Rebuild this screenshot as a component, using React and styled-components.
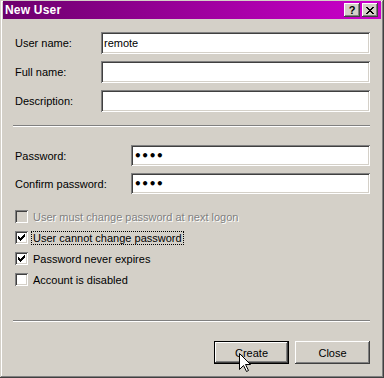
import React from "react";
import styled, { createGlobalStyle, css } from "styled-components";

const GlobalStyle = createGlobalStyle`
  html, body {
    margin: 0;
    padding: 0;
    background: #d4d0c8;
  }
  body {
    font-family: "Liberation Sans", Arial, sans-serif;
    font-size: 11px;
    color: #000;
  }
`;

const raised = css`
  background: #d4d0c8;
  box-shadow: inset -1px -1px #404040, inset 1px 1px #ffffff,
    inset -2px -2px #808080, inset 2px 2px #d4d0c8;
`;

const sunken = css`
  box-shadow: inset 1px 1px #808080, inset -1px -1px #ffffff,
    inset 2px 2px #404040, inset -2px -2px #d4d0c8;
`;

export default function App() {
  return (
    <>
      <GlobalStyle />
      <Window>
        <TitleBar>
          <Title>New User</Title>
          <CaptionButtons>
            <CaptionButton>?</CaptionButton>
            <CaptionButton>
              <svg width="8" height="7" viewBox="0 0 8 7">
                <path
                  d="M0 0h2v1h1v1h2V1h1V0h2v1H7v1H6v1H5v1h1v1h1v1h1v1H6V6H5V5H3v1H2v1H0V6h1V5h1V4h1V3H2V2H1V1H0z"
                  fill="#000"
                />
              </svg>
            </CaptionButton>
          </CaptionButtons>
        </TitleBar>

        <Body>
          <FieldGrid $label={86}>
            <Label>User name:</Label>
            <TextBox readOnly value="remote" />
            <Label>Full name:</Label>
            <TextBox readOnly value="" />
            <Label>Description:</Label>
            <TextBox readOnly value="" />
          </FieldGrid>

          <Separator $top={13} />

          <FieldGrid $label={116} $top={18} $row={21}>
            <Label>Password:</Label>
            <TextBox readOnly type="password" value="abcd" $secret />
            <Label>Confirm password:</Label>
            <TextBox readOnly type="password" value="abcd" $secret />
          </FieldGrid>

          <CheckList>
            <CheckRow $disabled>
              <Box $disabled />
              <CheckText>User must change password at next logon</CheckText>
            </CheckRow>
            <CheckRow>
              <Box>
                <Tick />
              </Box>
              <CheckText $focused>User cannot change password</CheckText>
            </CheckRow>
            <CheckRow>
              <Box>
                <Tick />
              </Box>
              <CheckText>Password never expires</CheckText>
            </CheckRow>
            <CheckRow>
              <Box />
              <CheckText>Account is disabled</CheckText>
            </CheckRow>
          </CheckList>

          <Separator $top={30} />

          <ButtonRow>
            <PushButton $default>
              Create
              <Cursor width="12" height="19" viewBox="0 0 12 19">
                <path
                  d="M0.5 0.5V16.5L4.5 12.5L7.5 18.5L9.5 17.5L6.5 11.5H11.5Z"
                  fill="#fff"
                  stroke="#000"
                  strokeWidth="1"
                />
              </Cursor>
            </PushButton>
            <PushButton>Close</PushButton>
          </ButtonRow>
        </Body>
      </Window>
    </>
  );
}

function Tick() {
  return (
    <svg width="7" height="7" viewBox="0 0 7 7">
      <path d="M0 2h1v1h1v1h1V3h1V2h1V1h1V0h1v3H6v1H5v1H4v1H3v1H2V6H1V5H0z" fill="#000" />
    </svg>
  );
}

const Window = styled.div`
  width: 384px;
  height: 378px;
  box-sizing: border-box;
  padding: 1px 3px 3px 3px;
  background: #d4d0c8;
  box-shadow: inset -1px -1px #404040, inset 1px 1px #d4d0c8,
    inset -2px -2px #808080, inset 2px 2px #ffffff;
  display: flex;
  flex-direction: column;
`;

const TitleBar = styled.div`
  height: 18px;
  display: flex;
  align-items: center;
  justify-content: space-between;
  padding: 0 3px 0 2px;
  background: linear-gradient(to right, #6c006c, #cc00cc);
`;

const Title = styled.span`
  color: #fff;
  font-weight: bold;
  font-size: 12px;
  letter-spacing: 0.2px;
`;

const CaptionButtons = styled.div`
  display: flex;
  gap: 2px;
`;

const CaptionButton = styled.div`
  ${raised};
  width: 16px;
  height: 14px;
  display: flex;
  align-items: center;
  justify-content: center;
  font-weight: bold;
  font-size: 11px;
  line-height: 1;
`;

const Body = styled.div`
  flex: 1;
  display: flex;
  flex-direction: column;
  padding: 13px 11px 0 12px;
`;

const FieldGrid = styled.div`
  display: grid;
  grid-template-columns: ${(p) => p.$label}px 1fr;
  grid-auto-rows: ${(p) => p.$row || 22}px;
  row-gap: 7px;
  align-items: center;
  margin-top: ${(p) => p.$top || 0}px;
`;

const Label = styled.label`
  font-size: 11px;
`;

const TextBox = styled.input`
  ${sunken};
  box-sizing: border-box;
  height: 100%;
  width: 100%;
  border: none;
  outline: none;
  background: #fff;
  padding: 0 3px;
  font-family: "Liberation Sans", Arial, sans-serif;
  font-size: 11px;
  color: #000;
  ${(p) =>
    p.$secret &&
    css`
      font-family: "DejaVu Sans", sans-serif;
      font-size: 12px;
      font-weight: bold;
      letter-spacing: -0.3px;
      padding-left: 3px;
    `}
`;

const Separator = styled.div`
  margin: ${(p) => p.$top}px 0 0 -2px;
  border-top: 1px solid #808080;
  border-bottom: 1px solid #ffffff;
  height: 0;
`;

const CheckList = styled.div`
  display: flex;
  flex-direction: column;
  margin-top: 12px;
`;

const CheckRow = styled.div`
  height: 21px;
  display: flex;
  align-items: center;
  color: ${(p) => (p.$disabled ? "#808080" : "#000")};
  text-shadow: ${(p) => (p.$disabled ? "1px 1px #ffffff" : "none")};
`;

const Box = styled.div`
  ${sunken};
  width: 13px;
  height: 13px;
  flex: none;
  background: ${(p) => (p.$disabled ? "#d4d0c8" : "#ffffff")};
  display: flex;
  align-items: center;
  justify-content: center;
`;

const CheckText = styled.span`
  margin-left: 3px;
  padding: 0 1px;
  line-height: 12px;
  border: 1px dotted ${(p) => (p.$focused ? "#000" : "transparent")};
`;

const ButtonRow = styled.div`
  display: flex;
  justify-content: flex-end;
  gap: 6px;
  margin-top: 19px;
`;

const PushButton = styled.div`
  ${raised};
  position: relative;
  box-sizing: border-box;
  width: 75px;
  height: 23px;
  display: flex;
  align-items: center;
  justify-content: center;
  font-size: 11px;
  ${(p) =>
    p.$default &&
    css`
      border: 1px solid #000;
    `}
`;

const Cursor = styled.svg`
  position: absolute;
  left: 24px;
  top: 11px;
`;
